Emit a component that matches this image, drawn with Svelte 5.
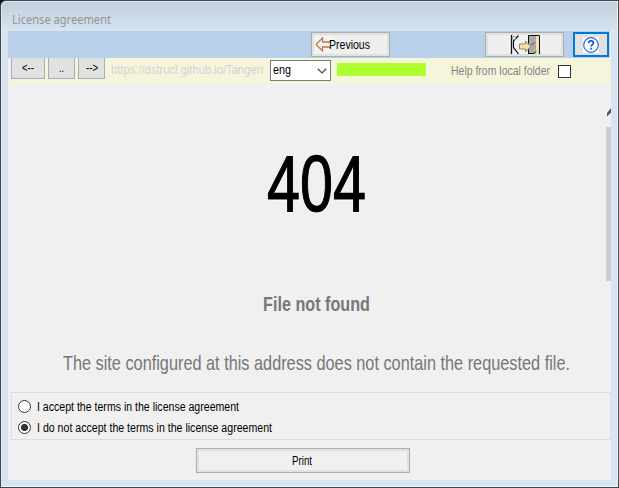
<script>
  let language = $state('eng');
  let accepted = $state(false);
  const choices = [
    { value: true, text: 'I accept the terms in the license agreement', width: 202 },
    { value: false, text: 'I do not accept the terms in the license agreement', width: 235 }
  ];
  const navigation = [
    { kind: 'back', text: '<--', width: 12 },
    { kind: 'up', text: '..', width: 5 },
    { kind: 'forward', text: '-->', width: 12 }
  ];
</script>

{#snippet label(text, width, height, baseline)}
  <svg class="label" {width} {height}>
    <text x="0" y={baseline} textLength={width} lengthAdjust="spacingAndGlyphs">{text}</text>
  </svg>
{/snippet}

<div class="window">
  <header>{@render label('License agreement', 99, 18, 14)}</header>
  <main>
    <div class="toolbar">
      <button class="previous">
        <svg width="16" height="17" viewBox="0 0 16 17"><rect width="16" height="17" fill="#f3f3f3" /><path d="M1 8.5 7.5 2v4H16M1 8.5 7.5 15v-4H16" fill="none" stroke="#b9754f" stroke-width="1.3" /></svg>
        {@render label('Previous', 41, 17, 11)}
      </button>
      <button class="exit" aria-label="Exit">
        <svg width="31" height="19" viewBox="0 0 31 19">
          <rect width="31" height="19" fill="#f3f3f3" />
          <path d="M2.5 0v19" stroke="#111" stroke-width="1.3" />
          <path d="M9.5 .5 4.5 6v6.5l5 6.5" fill="none" stroke="#111" stroke-width="1.2" />
          <circle cx="5" cy="3" r="1.7" fill="#eee" stroke="#999" />
          <rect x="19" y="0" width="9" height="19" fill="#aaa" />
          <rect x="27" y="1" width="3" height="18" fill="#f7dfa5" />
          <path d="M19.5 19V.5h11V19M19 18.5h6l2-2" fill="none" stroke="#111" />
          <path d="m22 10 2-1 2-2" fill="none" stroke="#555" />
          <path d="M10.5 9h6V6.3l5.5 5.2-5.5 5.2V14h-6z" fill="#f7dfa5" stroke="#8d8570" />
        </svg>
      </button>
      <button class="help" aria-label="Help">
        <svg width="16" height="16" viewBox="0 0 16 16"><rect width="16" height="16" fill="#fff" /><circle cx="8" cy="8" r="7.3" fill="#fff" stroke="#2863e8" stroke-width="1.2" /><path d="M5.7 6.1C5.7 3.2 10.4 3.3 10.4 6c0 1.7-2.3 1.7-2.3 3.6M8.1 10.8v1.8" fill="none" stroke="#174fe5" stroke-width="1.7" /></svg>
      </button>
    </div>

    <div class="location">
      {#each navigation as item}
        <button class={item.kind}>{@render label(item.text, item.width, 16, 12)}</button>
      {/each}
      <div class="url">{@render label('https://dstrucl.github.io/Tangerr', 153, 20, 13)}</div>
      <button class="select" onclick={() => (language = 'eng')}>
        {@render label(language, 18, 19, 13)}
        <svg width="10" height="6" viewBox="0 0 10 6"><path d="m.8.8 4.2 4.1L9.2.8" fill="none" stroke="#444" stroke-width="1.2" /></svg>
      </button>
      <div class="progress"></div>
      <label class="local">
        {@render label('Help from local folder', 99, 20, 13)}
        <input type="checkbox" aria-label="Help from local folder" />
      </label>
    </div>

    <section class="page">
      <article>
        <h1>{@render label('404', 99, 80, 70)}</h1>
        <h2>{@render label('File not found', 107, 26, 19)}</h2>
        <p>{@render label('The site configured at this address does not contain the requested file.', 507, 26, 19)}</p>
      </article>
      <div class="scroll">
        <svg width="5" height="9" viewBox="0 0 5 9"><path d="M1 8.5 5 4.5V0L1 5z" fill="#555" /></svg>
        <div class="thumb"></div>
      </div>
    </section>

    <div class="group">
      {#each choices as choice}
        <label>
          <input type="radio" name="terms" checked={accepted === choice.value} onchange={() => (accepted = choice.value)} />
          {@render label(choice.text, choice.width, 21, 15)}
        </label>
      {/each}
    </div>
    <footer><button>{@render label('Print', 20, 19, 14)}</button></footer>
  </main>
</div>

<style>
  :global(body) { background: #111; overflow: hidden; }
  * { box-sizing: border-box; }
  svg { display: block; flex: none; }
  .label { overflow: visible; fill: currentColor; }
  button { padding: 0; font: inherit; color: #000; border-radius: 0; }
  .window {
    width: 619px; height: 488px; border: 1px solid #48484b; border-radius: 6px 0 0 0;
    padding: 0 7px 7px; font: 12px "Liberation Sans", sans-serif;
    background: linear-gradient(#c0cedb, #d7e4f1 30px);
    box-shadow: inset -1px -1px #edf3f9, inset 1px 1px #dce8f3;
  }
  header { height: 30px; padding: 9px 0 0 4px; color: #929496; font: 12px "Noto Sans", sans-serif; }
  main { width: 603px; height: 449px; background: #f0f0f0; overflow: hidden; }
  .toolbar { width: 602px; height: 27px; display: flex; align-items: center; padding-left: 303px; background: #b9d0eb; }
  .toolbar button { height: 25px; background: #efefef; border: 1px solid #adadad; box-shadow: inset 0 0 0 2px #e1e1e1; display: flex; align-items: center; }
  .toolbar .previous { width: 79px; padding-left: 3px; }
  .previous .label { margin-left: -2px; position: relative; top: 2px; }
  .toolbar .exit { width: 79px; margin-left: 95px; justify-content: center; }
  .toolbar .help { width: 36px; margin-left: 9px; border: 2px solid #0078d7; background: #e1e1e1; justify-content: center; box-shadow: none; }
  .location { height: 26px; margin-left: 3px; display: flex; align-items: flex-start; background: #f5f5dc; }
  .back, .up, .forward { height: 21px; border: 1px solid #adadad; border-top: 0; background: #e1e1e1; display: flex; justify-content: center; padding-top: 2px; }
  .back { width: 34px; margin-right: 3px; }
  .up { width: 27px; margin-right: 3px; }
  .forward { width: 27px; }
  .url { width: 153px; margin: 3px 6px 0; color: #d3d3d3; }
  .select { width: 61px; height: 21px; margin-top: 2px; border: 1px solid #7a7a7a; background: #fff; display: flex; align-items: center; justify-content: space-between; padding: 0 3px 0 2px; }
  .progress { width: 89px; height: 13px; margin: 5px 25px 0 6px; background: #adff2f; }
  .local { display: flex; color: #848484; padding-top: 4px; }
  .local input { appearance: none; width: 13px; height: 13px; border: 1px solid #333; margin: 3px 0 0 8px; background: #fff; }
  .page { height: 308px; display: flex; }
  article { width: 598px; display: flex; flex-direction: column; align-items: center; padding: 57px 0 0 18px; }
  h1, h2, p { margin: 0; color: #777; font-size: 21px; }
  h1 { color: #000; font-size: 79px; font-weight: 400; height: 80px; }
  h1 .label { stroke: #000; stroke-width: 1.2px; filter: drop-shadow(0 1px #fff); }
  h2 { height: 26px; margin-top: 71px; }
  p { margin-top: 33px; }
  .scroll { width: 5px; padding-top: 24px; }
  .thumb { height: 154px; margin-top: 10px; background: #cdcdcd; }
  .group { height: 48px; margin-left: 3px; border: 1px solid #dcdcdc; padding: 3px 0 0 6px; }
  .group label { height: 21px; display: flex; align-items: center; }
  .group input { appearance: none; width: 13px; height: 13px; margin: 0 6px 0 0; border: 1px solid #333; border-radius: 50%; background: #fff; }
  .group input:checked { background: radial-gradient(circle, #333 0 3.3px, #fff 3.8px); }
  footer { display: flex; padding: 8px 0 0 188px; }
  footer button { width: 214px; height: 25px; border: 1px solid #adadad; background: #f0f0f0; box-shadow: inset 0 0 0 2px #e1e1e1; display: flex; justify-content: center; align-items: center; }
  footer .label { position: relative; left: -1px; }
</style>
